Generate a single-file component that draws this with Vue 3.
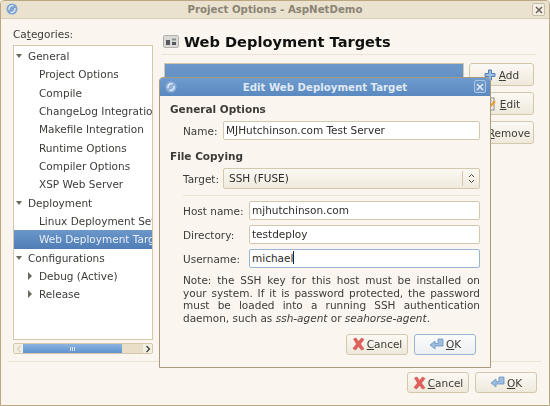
<template>
  <div class="window">
    <div class="titlebar">
      <svg class="app-icon" viewBox="0 0 12 12" width="12" height="12">
        <circle cx="6" cy="6" r="5.5" fill="#7ea4d2" />
        <path d="M3 7C2.500 4 5 2 7.500 3M9 5C9.500 8 7 10 4.500 9" fill="none" stroke="#e8eef6" stroke-width="1.3" />
      </svg>
      <span class="title-text">Project Options - AspNetDemo</span>
      <span class="close-btn">
        <svg viewBox="0 0 8 8" width="8" height="8"><path d="M1 1L7 7M7 1L1 7" stroke="#6b6355" stroke-width="1.5" /></svg>
      </span>
    </div>

    <div class="main">
      <div class="sidebar">
        <div class="cat-label">Ca<u>t</u>egories:</div>
        <div class="tree">
          <div v-for="r in rows" :key="r.label" class="tree-row" :class="{ selected: r.selected }" :style="{ paddingLeft: r.indent + 'px' }">
            <span v-if="r.arrow" class="arrow" :class="r.arrow"></span>
            <span class="tree-label">{{ r.label }}</span>
          </div>
        </div>
        <div class="hscroll">
          <span class="hscroll-end">
            <svg viewBox="0 0 6 8" width="6" height="8"><path d="M4.500 1L1.500 4L4.500 7" fill="none" stroke="#d8cdb8" stroke-width="1.2" /></svg>
          </span>
          <span class="hscroll-thumb"><span class="grip"></span></span>
          <span class="hscroll-rest"></span>
          <span class="hscroll-end right">
            <svg viewBox="0 0 6 8" width="6" height="8"><path d="M1.500 1L4.500 4L1.500 7" fill="none" stroke="#3b3934" stroke-width="1.2" /></svg>
          </span>
        </div>
      </div>

      <div class="page">
        <div class="page-head">
          <svg class="page-icon" viewBox="0 0 16 13" width="16" height="13">
            <rect x="0.5" y="0.5" width="15" height="12" rx="1.5" fill="#dcdad6" stroke="#b5b2ac" />
            <rect x="3" y="5" width="4" height="5" fill="#55595f" />
            <rect x="9" y="3.500" width="4" height="2" fill="#8a8e94" />
            <rect x="9" y="7" width="4" height="3" fill="#55595f" />
          </svg>
          <span class="page-title">Web Deployment Targets</span>
        </div>
        <div class="page-body">
          <div class="target-list"><div class="target-sel"></div></div>
          <div class="side-btns">
            <button class="btn">
              <svg viewBox="0 0 12 12" width="12" height="12"><path d="M4.500 1H7.500V4.500H11V7.500H7.500V11H4.500V7.500H1V4.500H4.500Z" fill="#9dbde2" stroke="#4f7fb8" /></svg>
              <span><u>A</u>dd</span>
            </button>
            <button class="btn">
              <svg viewBox="0 0 14 14" width="14" height="14"><rect x="1" y="1" width="10" height="12" fill="#f4f2ee" stroke="#8d8b86" /><path d="M3 4H9M3 7H8M3 10H6" stroke="#9a9893" /><path d="M5 12L12 4" stroke="#ee9a1e" stroke-width="2" /></svg>
              <span><u>E</u>dit</span>
            </button>
            <button class="btn">
              <svg viewBox="0 0 12 12" width="12" height="12"><path d="M2 2L10 10M10 2L2 10" stroke="#d9534f" stroke-width="2.500" /></svg>
              <span><u>R</u>emove</span>
            </button>
          </div>
        </div>
      </div>
    </div>

    <div class="main-sep"></div>

    <div class="actions main-actions">
      <button class="btn action">
        <svg class="x-icon" viewBox="0 0 13 14" width="13" height="14"><path d="M1.500 2L4 1L6.500 4.500L9.500 1L12 2.500L8.500 7L12 12L9.500 13L6.500 9.500L3.500 13L1 11.500L4.500 7Z" fill="#e2605c" stroke="#c9504c" stroke-width="0.6" /></svg>
        <span><u>C</u>ancel</span>
      </button>
      <button class="btn action">
        <svg class="ok-icon" viewBox="0 0 15 13" width="15" height="13"><path d="M9 1H14V8H6V11L1 7L6 3V5.500H9Z" fill="#9cbce0" stroke="#6d95c4" stroke-width="0.8" /></svg>
        <span><u>O</u>K</span>
      </button>
    </div>

    <div class="dialog">
      <div class="titlebar dlg-bar">
        <svg class="app-icon" viewBox="0 0 12 12" width="12" height="12">
          <circle cx="6" cy="6" r="5.500" fill="#8fb0d8" />
          <path d="M3 7C2.500 4 5 2 7.500 3M9 5C9.500 8 7 10 4.500 9" fill="none" stroke="#eef2f8" stroke-width="1.3" />
        </svg>
        <span class="title-text">Edit Web Deployment Target</span>
        <span class="close-btn dlg-close">
          <svg viewBox="0 0 8 8" width="8" height="8"><path d="M1 1L7 7M7 1L1 7" stroke="#e4ebf4" stroke-width="1.5" /></svg>
        </span>
      </div>
      <div class="dlg-body">
        <div class="group-title">General Options</div>
        <div class="form-row name-row">
          <label class="lbl name-lbl">Name:</label>
          <div class="field">MJHutchinson.com Test Server</div>
        </div>
        <div class="group-title second">File Copying</div>
        <div class="form-row target-row">
          <label class="lbl name-lbl">Target:</label>
          <div class="field combo">
            <span>SSH (FUSE)</span>
            <span class="combo-arrows">
              <svg viewBox="0 0 7 11" width="7" height="11"><path d="M1 4L3.500 1.500L6 4M1 7L3.500 9.500L6 7" fill="none" stroke="#4a4843" stroke-width="1" /></svg>
            </span>
          </div>
        </div>
        <div class="dlg-sep"></div>
        <div class="form-row stack-row">
          <label class="lbl wide-lbl">Host name:</label>
          <div class="field">mjhutchinson.com</div>
        </div>
        <div class="form-row stack-row">
          <label class="lbl wide-lbl">Directory:</label>
          <div class="field">testdeploy</div>
        </div>
        <div class="form-row stack-row">
          <label class="lbl wide-lbl">Username:</label>
          <div class="field focused">michael<span class="caret"></span></div>
        </div>
        <p class="note">Note: the SSH key for this host must be installed on your system. If it is password protected, the password must be loaded into a running SSH authentication daemon, such as <i>ssh-agent</i> or <i>seahorse-agent</i>.</p>
        <div class="actions dlg-actions">
          <button class="btn action">
            <svg class="x-icon" viewBox="0 0 13 14" width="13" height="14"><path d="M1.500 2L4 1L6.500 4.500L9.500 1L12 2.500L8.500 7L12 12L9.500 13L6.500 9.500L3.500 13L1 11.500L4.500 7Z" fill="#e2605c" stroke="#c9504c" stroke-width="0.6" /></svg>
            <span><u>C</u>ancel</span>
          </button>
          <button class="btn action default">
            <svg class="ok-icon" viewBox="0 0 15 13" width="15" height="13"><path d="M9 1H14V8H6V11L1 7L6 3V5.500H9Z" fill="#9cbce0" stroke="#6d95c4" stroke-width="0.8" /></svg>
            <span><u>O</u>K</span>
          </button>
        </div>
      </div>
    </div>
  </div>
</template>

<script setup>
const rows = [
  { label: 'General', indent: 2, arrow: 'down' },
  { label: 'Project Options', indent: 25 },
  { label: 'Compile', indent: 25 },
  { label: 'ChangeLog Integration', indent: 25 },
  { label: 'Makefile Integration', indent: 25 },
  { label: 'Runtime Options', indent: 25 },
  { label: 'Compiler Options', indent: 25 },
  { label: 'XSP Web Server', indent: 25 },
  { label: 'Deployment', indent: 2, arrow: 'down' },
  { label: 'Linux Deployment Settings', indent: 25 },
  { label: 'Web Deployment Targets', indent: 25, selected: true },
  { label: 'Configurations', indent: 2, arrow: 'down' },
  { label: 'Debug (Active)', indent: 14, arrow: 'right' },
  { label: 'Release', indent: 14, arrow: 'right' }
]
</script>

<style>
html, body { margin: 0; background: #faf6ef; }
</style>

<style scoped>
.window {
  position: relative;
  width: 550px;
  height: 406px;
  box-sizing: border-box;
  border: 1px solid #bba883;
  border-radius: 4px 4px 0 0;
  background: #faf6ef;
  font-family: "DejaVu Sans", sans-serif;
  font-size: 10.5px;
  color: #3c3b37;
  display: flex;
  flex-direction: column;
  overflow: hidden;
  filter: blur(0.35px);
}
.titlebar {
  height: 17px;
  flex-shrink: 0;
  display: flex;
  align-items: center;
  justify-content: center;
  position: relative;
  background: #eae1cf;
  border-bottom: 1px solid #d9ceb8;
}
.app-icon { position: absolute; left: 5px; top: 2px; }
.title-text { font-size: 10.2px; font-weight: 700; color: #8a8474; }
.close-btn {
  position: absolute;
  right: 4px;
  top: 2px;
  width: 11px;
  height: 11px;
  border: 1px solid #c9bea8;
  border-radius: 2px;
  display: flex;
  align-items: center;
  justify-content: center;
  background: #f4efe5;
}
.main { display: flex; height: 342px; flex-shrink: 0; }
.sidebar { width: 152px; box-sizing: border-box; padding-left: 12px; flex-shrink: 0; }
.cat-label { margin-top: 9px; height: 17px; line-height: 13px; }
.tree {
  width: 140px;
  height: 295px;
  box-sizing: border-box;
  background: #fff;
  border: 1px solid #d3c7ad;
  overflow: hidden;
  padding-top: 1px;
}
.tree-row {
  height: 18.34px;
  line-height: 18px;
  display: flex;
  align-items: center;
  white-space: nowrap;
  position: relative;
}
.tree-row.selected {
  background: linear-gradient(#6b97c9, #4f7db5);
  color: #e8eef6;
}
.arrow { display: inline-block; width: 0; height: 0; flex-shrink: 0; }
.arrow.down {
  border-left: 3px solid transparent;
  border-right: 3px solid transparent;
  border-top: 4px solid #6a675f;
  margin-right: 6px;
}
.arrow.right {
  border-top: 4px solid transparent;
  border-bottom: 4px solid transparent;
  border-left: 4px solid #6a675f;
  margin-right: 7px;
}
.hscroll {
  margin-top: 3px;
  width: 140px;
  height: 11px;
  box-sizing: border-box;
  border: 1px solid #d3c7ad;
  border-radius: 2px;
  background: #e9dfc9;
  display: flex;
}
.hscroll-end {
  width: 9px;
  display: flex;
  align-items: center;
  justify-content: center;
  background: #f3eee2;
  flex-shrink: 0;
}
.hscroll-thumb {
  width: 99px;
  background: linear-gradient(#8db3e0, #5e92cf);
  display: flex;
  align-items: center;
  justify-content: center;
}
.grip { width: 5px; height: 4px; background: repeating-linear-gradient(90deg, #d6e4f4 0 1px, transparent 1px 2px); }
.hscroll-rest { flex: 1; }
.page { flex: 1; padding-left: 10px; min-width: 0; }
.page-head {
  display: flex;
  align-items: center;
  gap: 5px;
  width: 374px;
  height: 25px;
  margin-top: 10px;
  border-bottom: 1px solid #ebe3d4;
  margin-left: -1px;
}
.page-icon { margin-left: 1px; }
.page-title { font-size: 14.6px; font-weight: 700; color: #111; }
.page-body { display: flex; gap: 5px; margin-top: 8px; }
.target-list {
  width: 300px;
  height: 180px;
  box-sizing: border-box;
  border: 1px solid #d3c7ad;
  background: #fff;
  margin-left: 1px;
}
.target-sel { height: 40px; background: linear-gradient(#6b97c9, #5584bd); }
.side-btns { display: flex; flex-direction: column; gap: 6px; }
.btn {
  font: inherit;
  color: #3c3b37;
  width: 65px;
  height: 23px;
  box-sizing: border-box;
  padding: 0;
  display: flex;
  align-items: center;
  justify-content: center;
  gap: 3px;
  border: 1px solid #d3c7ad;
  border-radius: 3px;
  background: linear-gradient(#fbf9f4, #efe9dc);
}
.main-sep { height: 1px; margin: 0 8px 0 7px; background: #ebe3d4; flex-shrink: 0; }
.actions { display: flex; gap: 6px; }
.main-actions { justify-content: flex-end; padding-right: 12px; margin-top: 10px; }
.action { width: 62px; height: 21px; gap: 2px; }
.action.default { border-color: #9ab5d3; background: linear-gradient(#fbfbfa, #edf0f2); }
.dialog {
  position: absolute;
  left: 158px;
  top: 76px;
  width: 332px;
  height: 291px;
  box-sizing: border-box;
  border: 1px solid #a89a7c;
  border-top-left-radius: 4px;
  border-top-right-radius: 4px;
  background: #faf6ef;
  overflow: hidden;
}
.dlg-bar { background: linear-gradient(#6f9bcd, #5a89c0); border-bottom: none; height: 18px; }
.dlg-bar .title-text { color: #dfe8f3; }
.dlg-bar .app-icon { left: 5px; top: 3px; }
.dlg-close { background: #6d98ca; border-color: #a9c3e0; right: 4px; top: 2px; width: 10px; height: 11px; }
.dlg-body { padding: 0 10px 0 10px; }
.group-title { font-weight: 700; margin-top: 7px; height: 13px; line-height: 13px; }
.group-title.second { margin-top: 10px; }
.form-row { display: flex; align-items: center; padding-left: 13px; }
.name-row { margin-top: 5px; }
.target-row { margin-top: 5px; }
.lbl { flex-shrink: 0; }
.name-lbl { width: 40px; }
.wide-lbl { width: 66px; }
.field {
  flex: 1;
  height: 19px;
  box-sizing: border-box;
  border: 1px solid #d3c7ad;
  border-radius: 2px;
  background: #fff;
  padding-left: 2px;
  line-height: 17px;
  color: #2e2d2a;
}
.field.focused { border-color: #9ab5d3; position: relative; }
.caret { display: inline-block; width: 1px; height: 13px; background: #222; vertical-align: -2px; }
.field.combo {
  height: 21px;
  line-height: 19px;
  padding-left: 5px;
  background: linear-gradient(#fbf9f4, #efe9dc);
  display: flex;
  justify-content: space-between;
  align-items: center;
}
.combo-arrows {
  width: 16px;
  height: 15px;
  border-left: 1px solid #d3c7ad;
  display: flex;
  align-items: center;
  justify-content: center;
}
.dlg-sep { height: 1px; background: #ebe3d4; margin: 6px 0 5px 13px; }
.stack-row { height: 19px; margin-bottom: 5px; }
.note {
  margin: 6px 0 0 13px;
  line-height: 12.7px;
  text-align: justify;
}
.dlg-actions { justify-content: flex-end; margin-top: 9px; padding-right: 4px; }
</style>
